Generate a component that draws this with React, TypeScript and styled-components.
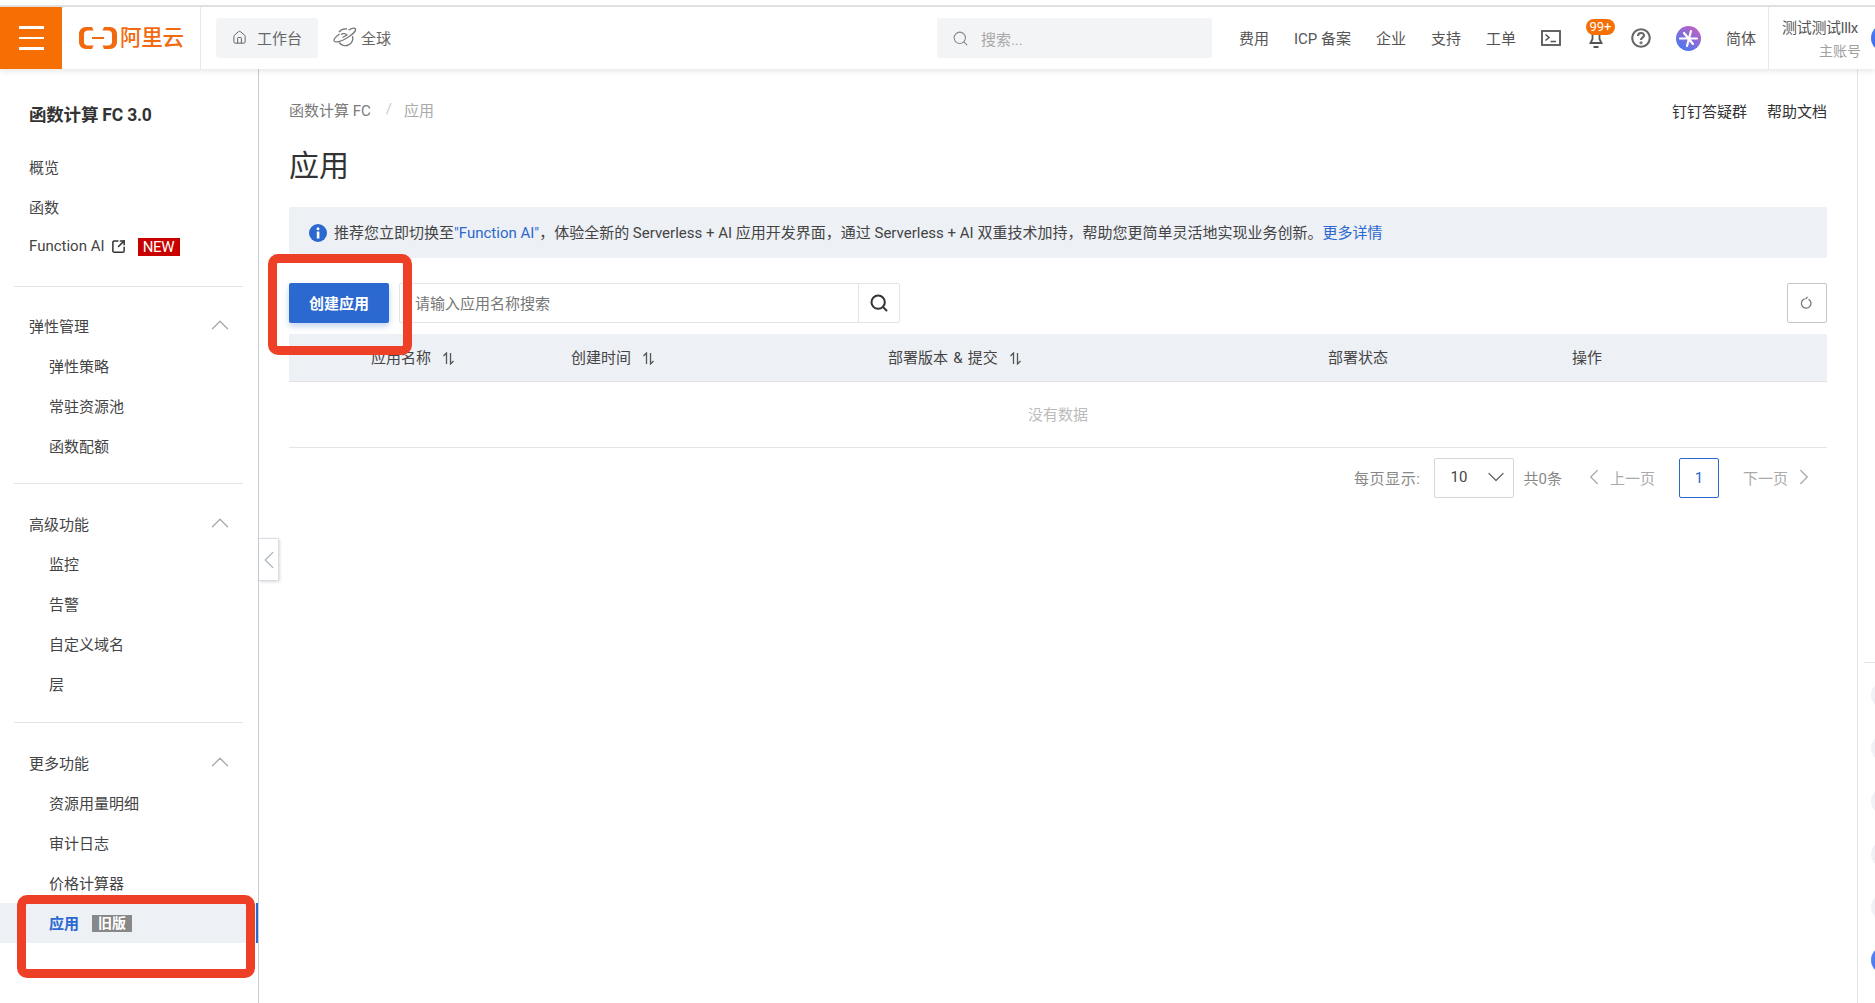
import React from "react";
import styled, { createGlobalStyle } from "styled-components";
import { Home, Search, ChevronUp, ChevronDown, ChevronLeft, ChevronRight, SquareArrowOutUpRight } from "lucide-react";

const Global = createGlobalStyle`
  html, body { margin: 0; padding: 0; background: #fff; }
  body { font-family: Roboto, "Noto Sans CJK SC", sans-serif; color: #333; overflow: hidden; }
  * { box-sizing: border-box; }
`;

const Page = styled.div`
  position: relative; width: 1875px; height: 1003px; overflow: hidden;
  display: flex; flex-direction: column; background: #fff;
`;
const TopStrip = styled.div`
  height: 7px; flex: none; border-bottom: 2px solid #e4e4e4;
`;
const Header = styled.header`
  position: relative; z-index: 2; height: 62px; flex: none; display: flex; align-items: center;
  background: #fff; box-shadow: 0 2px 6px rgba(0,0,0,.1); font-size: 15px; color: #555;
`;
const Burger = styled.div`
  width: 62px; height: 100%; background: #f66f05; display: flex; flex-direction: column;
  justify-content: center; align-items: center; gap: 8px;
  span { display: block; width: 25px; height: 2.5px; background: #fff; }
`;
const LogoBlock = styled.div`
  width: 139px; height: 100%; display: flex; align-items: center; padding-left: 17px; gap: 3px;
  border-right: 1px solid #e8e8e8;
`;
const LogoText = styled.span`
  color: #f26a0f; font-size: 21.500px; font-weight: 500; line-height: 24px; letter-spacing: -.3px; white-space: nowrap;
`;
const Workbench = styled.div`
  margin-left: 15px; width: 102px; height: 40px; border-radius: 3px; background: #f3f4f6;
  display: flex; align-items: center; padding: 0 0 2px 16px; gap: 10px; color: #666;
`;
const Region = styled.div`
  margin-left: 15px; display: flex; align-items: center; gap: 4px; color: #666; padding-bottom: 2px;
`;
const Spacer = styled.div` flex: 1; `;
const SearchBox = styled.div`
  width: 275px; height: 40px; background: #f3f4f6; display: flex; align-items: center;
  padding-left: 15px; gap: 12px; color: #a8a8a8; border-radius: 2px;
`;
const NavList = styled.nav`
  margin-left: 27px; display: flex; align-items: center; gap: 25px; white-space: nowrap;
  & > span { padding-bottom: 1px; }
`;
const NavIcon = styled.div`
  position: relative; display: flex; width: ${p => p.$w || 20}px; height: 26px; align-items: center; justify-content: center;
`;
const Badge = styled.div`
  position: absolute; left: 0; top: -6px; height: 16px; width: 29px; border-radius: 8px;
  background: #f66f05; color: #fff; font-size: 13px; line-height: 16px; text-align: center;
`;
const UserBlock = styled.div`
  margin-left: 12px; width: 107px; height: 100%; border-left: 1px solid #e8e8e8; position: relative;
  padding: 11px 0 0 13px; line-height: 20px; white-space: nowrap; flex: none;
`;
const UserName = styled.div` font-size: 15px; color: #555; letter-spacing: -.3px; `;
const UserRole = styled.div` font-size: 14px; color: #a0a0a0; margin-top: 3px; padding-left: 37px; `;
const Avatar = styled.span`
  position: absolute; left: 102px; top: 17px; width: 28px; height: 28px; border-radius: 50%;
  background: linear-gradient(135deg, #4f7df5, #2f62e6);
`;

const Body = styled.div` flex: 1; display: flex; min-height: 0; `;
const Sidebar = styled.aside`
  width: 259px; flex: none; border-right: 1px solid #c6ccd4; padding-top: 26px; font-size: 15px; color: #444;
`;
const SideTitle = styled.div`
  height: 40px; line-height: 40px; padding-left: 29px; font-size: 17.500px; font-weight: 700; color: #333; margin-bottom: 12px; letter-spacing: -.2px;
`;
const SideItem = styled.div`
  position: relative; height: 40px; display: flex; align-items: center; padding: 0 0 2px ${p => p.$sub ? 49 : 29}px;
  ${p => p.$active && `background: #edf0f5; color: #2b68cf; font-weight: 700;
    &::after { content: ""; position: absolute; right: 0; top: 0; bottom: 0; width: 2px; background: #2b68cf; }`}
`;
const GroupHead = styled(SideItem)`
  justify-content: space-between; padding-right: 23px; color: #444;
`;
const SideDivider = styled.div`
  height: 1px; background: #e3e4e7; margin: ${p => p.$top}px 15px ${p => p.$bottom}px 14px;
`;
const ExtIcon = styled.div` display: flex; margin-left: 6px; color: #333; `;
const NewTag = styled.div`
  margin: 2px 0 0 12px; width: 42px; height: 18px; background: #c80000; color: #fff; font-size: 15px;
  line-height: 18px; text-align: center; letter-spacing: -.3px;
`;
const OldTag = styled.div`
  margin: 2px 0 0 13px; width: 40px; height: 17px; background: #888; color: #fff; font-size: 14px; font-weight: 700;
  line-height: 17px; text-align: center;
`;

const Main = styled.main`
  flex: 1; min-width: 0; padding: 31px 30px 0; font-size: 15px;
`;
const CrumbRow = styled.div`
  height: 20px; display: flex; align-items: center; justify-content: space-between;
`;
const Crumbs = styled.div` display: flex; align-items: center; color: #7a7a7a; padding-bottom: 2px; `;
const CrumbSep = styled.span` margin: 0 12px 0 15px; color: #ccc; `;
const CrumbNow = styled.span` color: #aaa; `;
const HelpLinks = styled.div` display: flex; gap: 20px; color: #333; `;
const PageTitle = styled.h1`
  margin: 26px 0 0; height: 40px; font-size: 30px; line-height: 40px; font-weight: 400; color: #333;
`;
const Alert = styled.div`
  margin-top: 21px; height: 51px; background: #edf0f5; border-radius: 2px; display: flex; align-items: center;
  padding-left: 20px; gap: 7px; color: #444; white-space: nowrap;
`;
const AlertText = styled.div` margin-bottom: 2px; `;
const Link = styled.span` color: #2b68cf; `;
const Toolbar = styled.div`
  margin-top: 25px; height: 40px; display: flex; align-items: center;
`;
const PrimaryButton = styled.button`
  width: 100px; height: 40px; border: 0; border-radius: 2px; background: #2b68cf; color: #fff; font-family: inherit;
  font-size: 15px; font-weight: 700; box-shadow: 0 3px 6px rgba(43,104,207,.3); padding: 0 0 2px;
`;
const SearchField = styled.div`
  margin-left: 10px; width: 501px; height: 40px; border: 1px solid #e3e4e7; border-radius: 2px; display: flex; align-items: center;
`;
const SearchInput = styled.div`
  flex: 1; padding: 0 0 2px 15px; color: #777;
`;
const SearchButton = styled.div`
  width: 41px; height: 100%; border-left: 1px solid #e3e4e7; display: flex; align-items: center; justify-content: center; color: #333;
`;
const RefreshButton = styled.div`
  margin-left: auto; width: 40px; height: 40px; border: 1px solid #c4c6ca; border-radius: 2px;
  display: flex; align-items: center; justify-content: center;
`;
const TableHead = styled.div`
  margin-top: 11px; height: 48px; padding: 0 0 2px 82px; background: #edf0f5; border-bottom: 1px solid #dfe1e4;
  display: grid; grid-template-columns: 200px 317px 440px 244px 1fr; align-items: center; color: #444;
`;
const HeadCell = styled.div` display: flex; align-items: center; gap: 11px; white-space: nowrap; word-spacing: 1.500px; `;
const SortMark = styled.svg` margin-top: 3px; flex: none; `;
const EmptyRow = styled.div`
  height: 66px; border-bottom: 1px solid #e3e4e7; display: flex; align-items: center; justify-content: center; color: #bbb; padding-bottom: 2px;
`;
const Pager = styled.div`
  margin-top: 10px; height: 40px; display: flex; align-items: center; justify-content: flex-end; padding-right: 10px; color: #888;
  white-space: nowrap;
`;
const PagerLabel = styled.span` letter-spacing: .6px; padding-bottom: 2px; `;
const PageSize = styled.div`
  margin-left: 13px; width: 80px; height: 40px; border: 1px solid #d5d6d9; border-radius: 2px; display: flex; align-items: center;
  justify-content: space-between; padding: 0 3px 2px 16px; color: #444;
`;
const Total = styled.span` margin-left: 10px; padding-bottom: 2px; `;
const PageStep = styled.div`
  display: flex; align-items: center; gap: 3px; color: #aaa; margin-left: ${p => p.$ml}px; padding-bottom: 2px;
`;
const PageNum = styled.div`
  margin-left: 24px; width: 40px; height: 40px; border: 1px solid #2b68cf; border-radius: 2px; color: #2b68cf;
  display: flex; align-items: center; justify-content: center;
`;
const Rail = styled.div`
  width: 18px; flex: none; border-left: 1px solid #e3e4e7; padding: 593px 0 0 6px; display: flex; flex-direction: column;
`;
const RailLine = styled.div` height: 1px; background: #e3e4e7; margin-bottom: 18px; `;
const RailDot = styled.div`
  flex: none; width: 28px; height: 28px; border-radius: 50%; margin: 0 0 25px 7px;
  background: ${p => p.$blue ? "linear-gradient(135deg,#5b86f7,#3a6ae8)" : "#f0f1f4"};
`;
const CollapseTab = styled.div`
  position: absolute; z-index: 1; left: 259px; top: 538px; width: 20px; height: 43px; background: #fff; border: 1px solid #dcdde0;
  border-left: 0; border-radius: 0 2px 2px 0; box-shadow: 1px 1px 3px rgba(0,0,0,.15); display: flex; align-items: center; justify-content: center; color: #b4b9c4;
  svg { flex: none; }
`;
const RedBox = styled.div`
  position: absolute; z-index: 3; border: 9px solid #ee4026; border-radius: 10px; pointer-events: none;
  left: ${p => p.$x}px; top: ${p => p.$y}px; width: ${p => p.$w}px; height: ${p => p.$h}px;
`;

const Sort = () => (
  <SortMark width="13" height="13" viewBox="0 0 13 13" fill="none" stroke="#555" strokeWidth="1.300">
    <path d="M4.500 12V1L1.500 4M8.500 1V12L11.500 9" />
  </SortMark>
);

const Logo = () => (
  <svg width="38" height="22" viewBox="0 0 38 22" fill="#f26a0f">
    <path d="M13 0H7C3 0 0 3 0 7V15C0 19 3 22 7 22H13L14.500 18.500H9C6.500 18.500 5 17 5 15V7C5 5 6.500 3.500 9 3.500H14.500Z" />
    <path d="M25 0H31C35 0 38 3 38 7V15C38 19 35 22 31 22H25L23.500 18.500H29C31.500 18.500 33 17 33 15V7C33 5 31.500 3.500 29 3.500H23.500Z" />
    <rect x="13" y="10" width="12" height="2" />
  </svg>
);

const Planet = () => (
  <svg width="24" height="20" viewBox="0 0 24 20" fill="none" stroke="#777" strokeWidth="1.300">
    <path d="M6 5C8 2.500 11 1.500 14 2M19.500 9A7.500 7.500 0 0 1 6.200 15.500" />
    <path d="M6.500 7C3 9.500.5 12.500 1.200 14 2.500 16 8 14.500 13 11.500 18 8.500 23.500 4 22.500 2 21.800.8 18.500 1.500 15.500 3" />
    <path d="M8 7.500c2-1.500 5-1 6 .5l-4.500 2.500" />
  </svg>
);

const Terminal = () => (
  <svg width="20" height="16" viewBox="0 0 20 16" fill="none" stroke="#555" strokeWidth="1.600">
    <rect x="1" y="1" width="18" height="14" strokeWidth="1.800" />
    <path d="M4.500 4.500 8 7.500 4.500 10.500M9.500 11.500H15" />
  </svg>
);

const Bell = () => (
  <svg width="16" height="22" viewBox="0 0 16 22" fill="none" stroke="#555" strokeWidth="1.800">
    <path d="M4.500 4V12L2.500 16H13.500L11.500 12V4M5.500 20H10.500" />
  </svg>
);

const HelpIcon = () => (
  <svg width="20" height="20" viewBox="0 0 20 20" fill="none" stroke="#666" strokeWidth="2.100">
    <circle cx="10" cy="10" r="8.800" />
    <path d="M7 8c0-4 6-4 6-.5 0 2.200-3 2.200-3 4.500" />
    <circle cx="10" cy="14.800" r=".5" fill="#666" />
  </svg>
);

const Spark = () => (
  <svg width="25" height="25" viewBox="0 0 25 25">
    <defs>
      <linearGradient id="sparkFill" x1="0.850" y1="0" x2="0.150" y2="1">
        <stop offset="0" stopColor="#c85fc0" />
        <stop offset="1" stopColor="#3f7bf2" />
      </linearGradient>
    </defs>
    <circle cx="12.500" cy="12.500" r="12.500" fill="url(#sparkFill)" />
    <path d="M4 12.500H21M15 5 11 20M8 7 17 18" stroke="#fff" strokeWidth="2.200" strokeLinecap="round" />
  </svg>
);

const Info = () => (
  <svg width="18" height="18" viewBox="0 0 18 18">
    <circle cx="9" cy="9" r="9" fill="#2b68cf" />
    <rect x="7.800" y="7.500" width="2.600" height="7" fill="#fff" />
    <circle cx="9" cy="4.800" r="1.500" fill="#fff" />
  </svg>
);

const Refresh = () => (
  <svg width="14" height="14" viewBox="0 0 14 14" fill="none" stroke="#777" strokeWidth="1.300">
    <path d="M8.500 3.200A4.800 4.800 0 1 1 4.600 2.900" />
    <path d="M7.500 1 5.500 3" />
  </svg>
);

const groups = [
  { title: "弹性管理", items: ["弹性策略", "常驻资源池", "函数配额"], top: 17 },
  { title: "高级功能", items: ["监控", "告警", "自定义域名", "层"], top: 18 },
];

const Collapse = () => <ChevronUp size={30} strokeWidth={1.1} color="#aaa" />;

const App: React.FC = () => (
  <Page>
    <Global />
    <TopStrip />
    <Header>
      <Burger><span /><span /><span /></Burger>
      <LogoBlock><Logo /><LogoText>阿里云</LogoText></LogoBlock>
      <Workbench><Home size={15} strokeWidth={1.6} />工作台</Workbench>
      <Region><Planet />全球</Region>
      <Spacer />
      <SearchBox><Search size={17} strokeWidth={1.5} color="#888" />搜索...</SearchBox>
      <NavList>
        <span>费用</span>
        <span>ICP 备案</span>
        <span>企业</span>
        <span>支持</span>
        <span>工单</span>
        <NavIcon><Terminal /></NavIcon>
        <NavIcon><Bell /><Badge>99+</Badge></NavIcon>
        <NavIcon><HelpIcon /></NavIcon>
        <NavIcon $w={25}><Spark /></NavIcon>
        <span>简体</span>
      </NavList>
      <UserBlock>
        <UserName>测试测试lllx</UserName>
        <UserRole>主账号</UserRole>
        <Avatar />
      </UserBlock>
    </Header>
    <Body>
      <Sidebar>
        <SideTitle>函数计算 FC 3.0</SideTitle>
        <SideItem>概览</SideItem>
        <SideItem>函数</SideItem>
        <SideItem>
          Function AI
          <ExtIcon><SquareArrowOutUpRight size={15} strokeWidth={2.4} /></ExtIcon>
          <NewTag>NEW</NewTag>
        </SideItem>
        <SideDivider $top={19} $bottom={19} />
        {groups.map(g => (
          <React.Fragment key={g.title}>
            <GroupHead>{g.title}<Collapse /></GroupHead>
            {g.items.map(i => <SideItem $sub key={i}>{i}</SideItem>)}
            <SideDivider $top={g.top} $bottom={20} />
          </React.Fragment>
        ))}
        <GroupHead>更多功能<Collapse /></GroupHead>
        <SideItem $sub>资源用量明细</SideItem>
        <SideItem $sub>审计日志</SideItem>
        <SideItem $sub>价格计算器</SideItem>
        <SideItem $sub $active>应用<OldTag>旧版</OldTag></SideItem>
      </Sidebar>
      <Main>
        <CrumbRow>
          <Crumbs>函数计算 FC<CrumbSep>/</CrumbSep><CrumbNow>应用</CrumbNow></Crumbs>
          <HelpLinks><span>钉钉答疑群</span><span>帮助文档</span></HelpLinks>
        </CrumbRow>
        <PageTitle>应用</PageTitle>
        <Alert>
          <Info />
          <AlertText>推荐您立即切换至<Link>"Function AI"</Link>，体验全新的 Serverless + AI 应用开发界面，通过 Serverless + AI 双重技术加持，帮助您更简单灵活地实现业务创新。<Link>更多详情</Link></AlertText>
        </Alert>
        <Toolbar>
          <PrimaryButton>创建应用</PrimaryButton>
          <SearchField>
            <SearchInput>请输入应用名称搜索</SearchInput>
            <SearchButton><Search size={20} strokeWidth={2.4} /></SearchButton>
          </SearchField>
          <RefreshButton><Refresh /></RefreshButton>
        </Toolbar>
        <TableHead>
          <HeadCell>应用名称<Sort /></HeadCell>
          <HeadCell>创建时间<Sort /></HeadCell>
          <HeadCell>部署版本 &amp; 提交<Sort /></HeadCell>
          <HeadCell>部署状态</HeadCell>
          <HeadCell>操作</HeadCell>
        </TableHead>
        <EmptyRow>没有数据</EmptyRow>
        <Pager>
          <PagerLabel>每页显示:</PagerLabel>
          <PageSize>10<ChevronDown size={28} strokeWidth={1.1} color="#666" /></PageSize>
          <Total>共0条</Total>
          <PageStep $ml={19}><ChevronLeft size={26} strokeWidth={1.2} />上一页</PageStep>
          <PageNum>1</PageNum>
          <PageStep $ml={24}>下一页<ChevronRight size={26} strokeWidth={1.2} /></PageStep>
        </Pager>
      </Main>
      <Rail>
        <RailLine />
        <RailDot /><RailDot /><RailDot /><RailDot /><RailDot />
        <RailDot $blue />
      </Rail>
    </Body>
    <CollapseTab><ChevronLeft size={30} strokeWidth={1.1} /></CollapseTab>
    <RedBox $x={268} $y={254} $w={144} $h={101} />
    <RedBox $x={17} $y={895} $w={238} $h={83} />
  </Page>
);

export default App;
